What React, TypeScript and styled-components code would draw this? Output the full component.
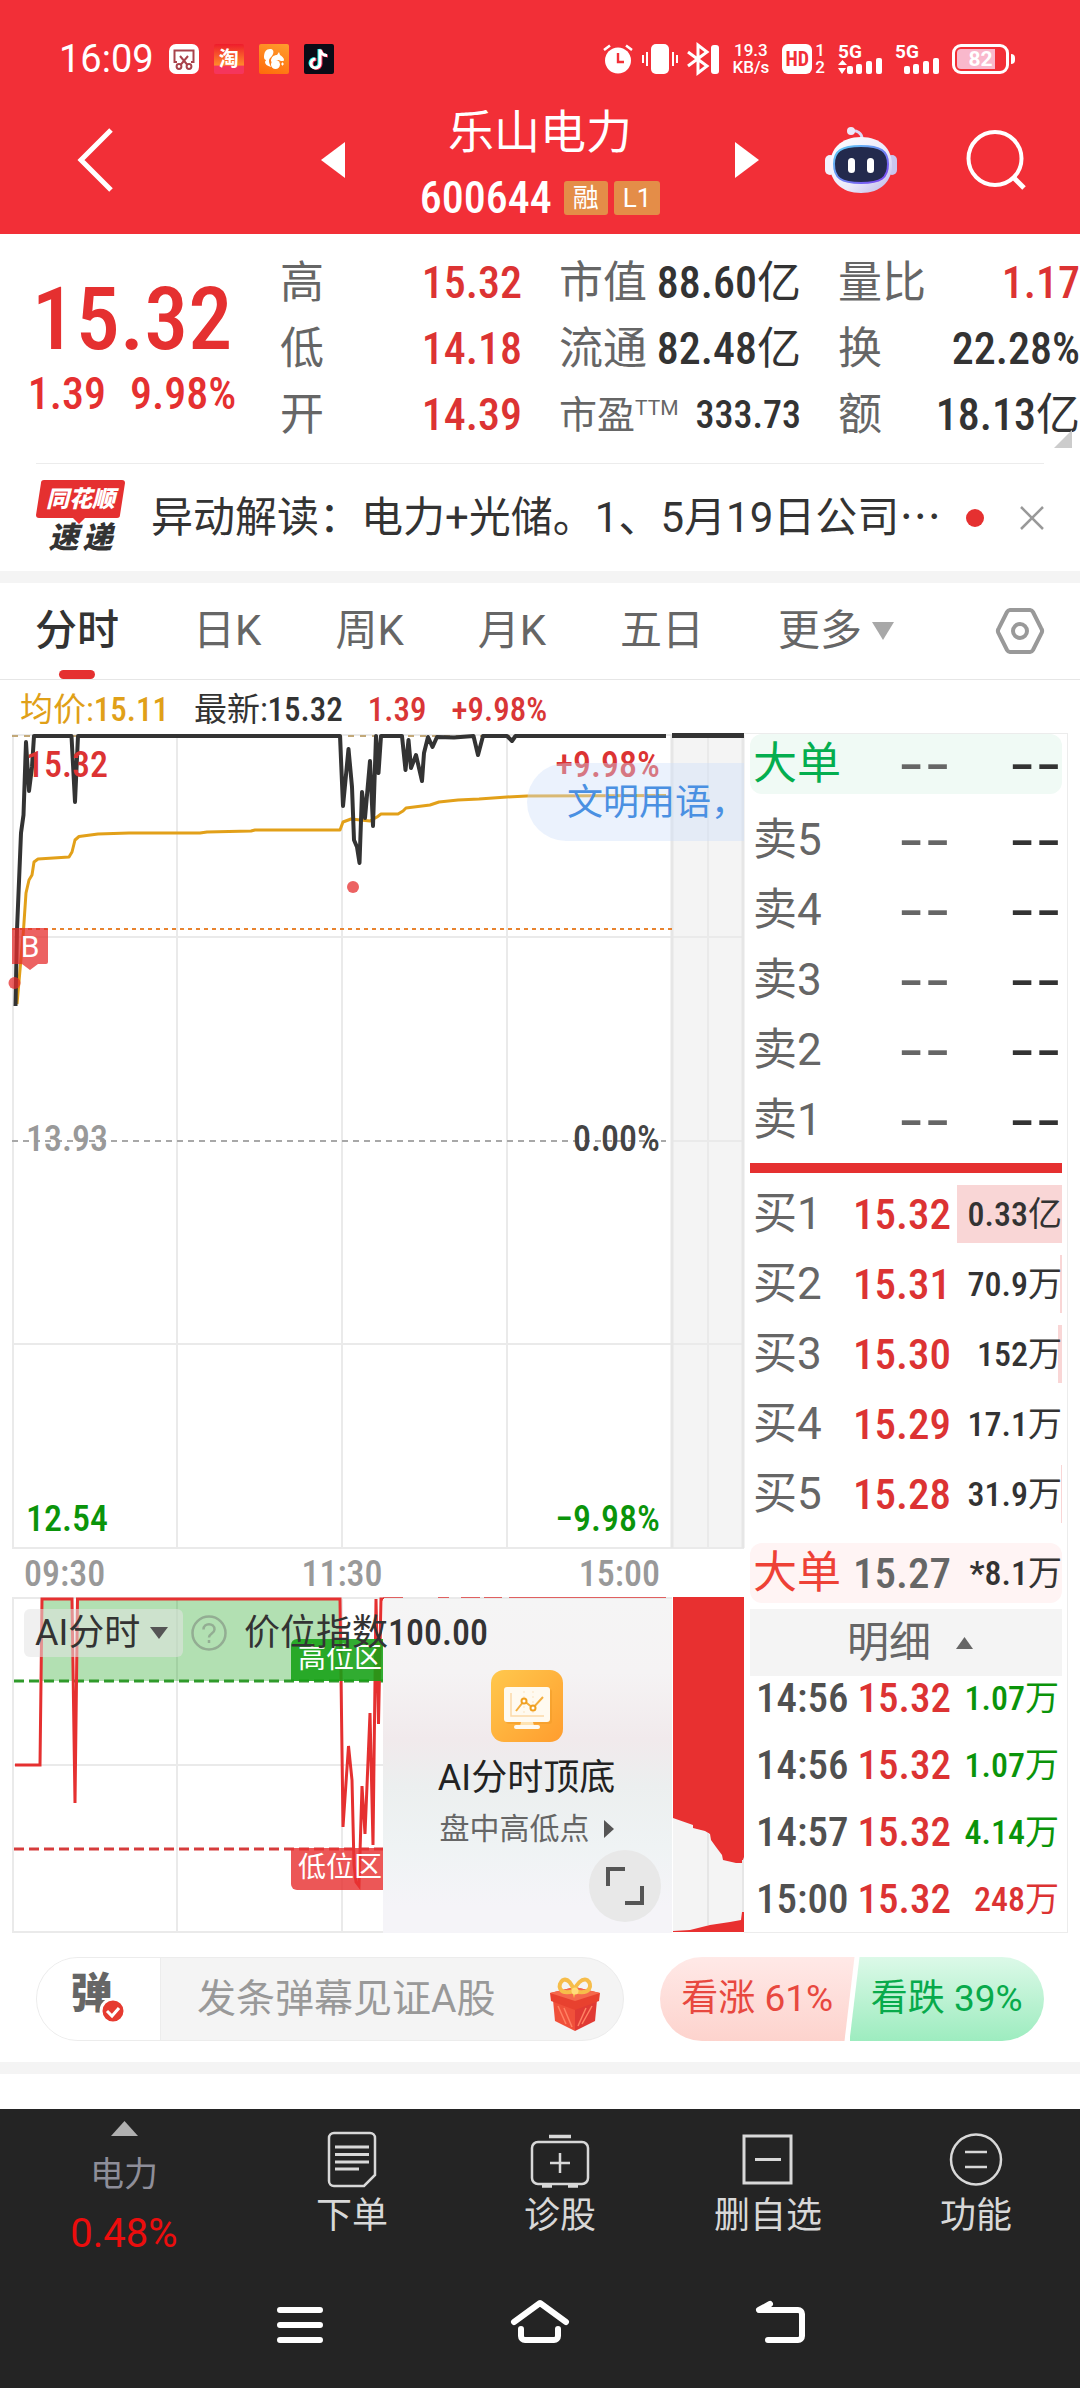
import React from 'react';
import styled, { createGlobalStyle, css } from 'styled-components';

const RED = '#e53030';
const INK = '#333333';
const MUTED = '#666666';
const LINE = '#ececec';
const BAND = '#f4f4f4';
const TEXT_FONT = 'Roboto, "Noto Sans CJK SC", sans-serif';
const NUM_FONT = '"Roboto Condensed", "Noto Sans CJK SC", sans-serif';

const GlobalStyle = createGlobalStyle`
  * { box-sizing: border-box; }
  body { margin: 0; background: #fff; font-family: ${TEXT_FONT}; color: ${INK}; }
  button, input, select { font-family: inherit; border: 0; padding: 0; margin: 0; background: none; color: inherit; }
  button { cursor: pointer; }
  a { color: inherit; text-decoration: none; }
  svg { display: block; flex: none; overflow: visible; }
  table, tbody { display: block; }
  td, th { padding: 0; font-weight: inherit; text-align: left; }
  dl, dd, dt, h1, p { margin: 0; font-weight: inherit; }
`;

const Page = styled.div`
  display: flex;
  flex-direction: column;
  min-height: 100vh;
`;

const Num = styled.span`
  font-family: ${NUM_FONT};
  font-weight: 500;
`;

const SrOnly = styled.span`
  position: absolute;
  width: 1px;
  height: 1px;
  overflow: hidden;
  clip-path: inset(50%);
`;

/* ---------- header ---------- */

const Header = styled.header`
  background: #f22f37;
  color: #fff;
  height: 234px;
`;

const StatusBar = styled.div`
  display: flex;
  align-items: center;
  justify-content: space-between;
  height: 118px;
  padding: 0 64px 0 59px;
`;

const StatusGroup = styled.div<{ $gap: number }>`
  display: flex;
  align-items: center;
  gap: ${p => p.$gap}px;
`;

const Clock = styled.time`
  font-size: 38px;
  line-height: 40px;
`;

const AppBadge = styled.span<{ $bg: string; $radius: number }>`
  display: grid;
  place-items: center;
  width: 30px;
  height: 30px;
  overflow: hidden;
  border-radius: ${p => p.$radius}px;
  background: ${p => p.$bg};
`;

const BadgeGlyph = styled.span`
  font-size: 20px;
  line-height: 22px;
  font-weight: 700;
`;

const Stack = styled.span<{ $size: number }>`
  display: flex;
  flex-direction: column;
  align-items: center;
  font-size: ${p => p.$size}px;
  line-height: 17px;
  font-weight: 500;
`;

const HdBox = styled.span`
  display: grid;
  place-items: center;
  width: 30px;
  height: 30px;
  border-radius: 6px;
  background: #fff;
  color: #f22f37;
  font: 700 20px/30px ${NUM_FONT};
`;

const Battery = styled.span`
  position: relative;
  display: grid;
  place-items: center;
  width: 57px;
  height: 30px;
  margin-right: 7px;
  border: 3px solid #fff;
  border-radius: 9px;
  background: linear-gradient(90deg, #f9b8cc 80%, transparent 80%) content-box;
  padding: 2px;
  font-size: 21px;
  line-height: 20px;
  font-weight: 700;
  &::after {
    content: '';
    position: absolute;
    right: -9px;
    top: 7px;
    width: 4px;
    height: 10px;
    border-radius: 0 4px 4px 0;
    background: #fff;
  }
`;

const TitleRow = styled.div`
  display: flex;
  align-items: center;
  height: 84px;
  padding: 0 54px 0 77px;
`;

const IconButton = styled.button`
  display: grid;
  place-items: center;
`;

const Switcher = styled.div`
  display: flex;
  flex: 1;
  align-items: center;
  justify-content: space-between;
  max-width: 438px;
  margin: 0 auto 0 208px;
`;

const TitleBlock = styled.div`
  display: flex;
  flex-direction: column;
  align-items: center;
`;

const StockName = styled.h1`
  font-size: 46px;
  line-height: 54px;
`;

const CodeLine = styled.div`
  display: flex;
  align-items: center;
  gap: 6px;
  height: 56px;
  padding-top: 22px;
  font-size: 44px;
  line-height: 34px;
`;

const Code = styled(Num)`
  margin-right: 6px;
`;

const Tag = styled.span`
  height: 34px;
  padding: 0 9px;
  border-radius: 3px;
  background: #e48d48;
  font-size: 26px;
  line-height: 34px;
`;

const HeadActions = styled.div`
  display: flex;
  align-items: center;
  gap: 69px;
`;

/* ---------- quote summary ---------- */

const Quote = styled.section`
  display: flex;
  padding: 16px 0 15px;
`;

const PriceBlock = styled.div`
  display: flex;
  flex-direction: column;
  align-items: center;
  gap: 8px;
  width: 264px;
  margin-right: 16px;
  padding-top: 27px;
  color: ${RED};
  font-family: ${NUM_FONT};
  font-weight: 500;
`;

const BigPrice = styled.strong`
  font-size: 88px;
  line-height: 84px;
  font-weight: 500;
`;

const Change = styled.div`
  display: flex;
  gap: 24px;
  font-size: 44px;
  line-height: 50px;
`;

const Stats = styled.dl`
  position: relative;
  display: grid;
  flex: 1;
  grid-template-columns: repeat(3, 1fr);
  grid-auto-rows: 66px;
  column-gap: 37px;
  &::after {
    content: '';
    position: absolute;
    right: 8px;
    bottom: 0;
    border-left: 18px solid transparent;
    border-bottom: 18px solid #cccccc;
  }
`;

const Stat = styled.div<{ $small?: boolean }>`
  display: flex;
  justify-content: space-between;
  white-space: nowrap;
  font-size: ${p => (p.$small ? 38 : 44)}px;
  line-height: 66px;
  dt { display: flex; color: ${MUTED}; }
`;

const StatValue = styled.dd<{ $up?: boolean }>`
  font-family: ${NUM_FONT};
  font-weight: 500;
  color: ${p => (p.$up ? '#dc3333' : INK)};
`;

const Unit = styled.span`
  font-weight: 400;
`;

const Sup = styled.sup`
  margin-top: 16px;
  font-size: 21px;
  line-height: 20px;
`;

const News = styled.section`
  display: flex;
  align-items: center;
  height: 108px;
  margin: 0 36px;
  border-top: 1px solid ${LINE};
`;

const NewsLogo = styled.div`
  position: relative;
  display: flex;
  flex-direction: column;
  align-items: center;
  width: 89px;
  margin-right: 26px;
  font-style: italic;
  font-weight: 900;
  svg { position: absolute; left: 0; top: 0; }
`;

const LogoTop = styled.span`
  position: relative;
  color: #fff;
  font-size: 23px;
  line-height: 40px;
`;

const LogoBottom = styled.span`
  display: flex;
  gap: 4px;
  font-size: 30px;
  line-height: 36px;
`;

const NewsText = styled.a`
  flex: 1;
  font-size: 42px;
  line-height: 54px;
  white-space: nowrap;
`;

const Dot = styled.i`
  width: 18px;
  height: 18px;
  margin-right: 36px;
  border-radius: 50%;
  background: ${RED};
`;

const Band = styled.div`
  height: 12px;
  background: ${BAND};
`;

/* ---------- tabs ---------- */

const Tabs = styled.nav`
  display: flex;
  align-items: center;
  gap: 74px;
  height: 97px;
  padding: 0 36px 0 35px;
  border-bottom: 1px solid #e6e6e6;
`;

const Tab = styled.button<{ $active?: boolean }>`
  position: relative;
  display: flex;
  align-items: center;
  gap: 10px;
  height: 96px;
  font-size: 42px;
  line-height: 100px;
  color: ${p => (p.$active ? INK : MUTED)};
  font-weight: ${p => (p.$active ? 500 : 400)};
  ${p => p.$active && css`
    &::after {
      content: '';
      position: absolute;
      left: 50%;
      bottom: 0;
      width: 36px;
      height: 9px;
      margin-left: -18px;
      border-radius: 5px;
      background: ${RED};
    }
  `}
`;

const SettingsButton = styled(IconButton)`
  margin-left: auto;
`;

const PriceLine = styled.div`
  display: flex;
  gap: 25px;
  height: 53px;
  padding-left: 20px;
  font: 500 33px/60px ${NUM_FONT};
  white-space: nowrap;
`;

const Quoted = styled.span<{ $color: string }>`
  color: ${p => p.$color};
`;

/* ---------- chart column ---------- */

const Board = styled.main`
  display: grid;
  grid-template-columns: minmax(0, 31fr) minmax(0, 14fr);
`;

const ChartColumn = styled.div``;

const BookColumn = styled.div`
  padding-right: 12px;
`;

const ChartBox = styled.div`
  position: relative;
  svg.plot { width: 100%; height: auto; }
`;

const AxisLabel = styled.span<{ $top: number; $side: 'left' | 'right'; $color: string }>`
  position: absolute;
  top: ${p => p.$top}px;
  ${p => (p.$side === 'left' ? 'left: 26px' : 'right: 84px')};
  color: ${p => p.$color};
  font: 500 36px/40px ${NUM_FONT};
`;

const Bubble = styled.div`
  position: absolute;
  right: 0;
  top: 30px;
  width: 217px;
  height: 78px;
  padding-left: 40px;
  border-radius: 39px 0 0 39px;
  background: rgba(205, 222, 250, 0.4);
  color: #4a90e2;
  font-size: 36px;
  line-height: 80px;
  white-space: nowrap;
`;

const TimeAxis = styled.div`
  display: flex;
  justify-content: space-between;
  height: 48px;
  padding: 0 84px 0 24px;
  color: #999;
  font: 500 36px/50px ${NUM_FONT};
`;

const SubTools = styled.div`
  position: absolute;
  left: 24px;
  top: 12px;
  z-index: 2;
  display: flex;
  align-items: center;
  height: 48px;
  font-size: 36px;
`;

const IndicatorPicker = styled.label`
  position: relative;
  width: 159px;
  height: 48px;
  margin-right: 8px;
  svg { position: absolute; right: 15px; top: 18px; pointer-events: none; }
`;

const Select = styled.select`
  width: 100%;
  height: 48px;
  padding-left: 11px;
  border-radius: 6px;
  background: rgba(228, 228, 228, 0.55);
  appearance: none;
  font-size: 36px;
`;

const IndexText = styled.span`
  display: flex;
  margin-left: 17px;
  font-family: ${NUM_FONT};
  line-height: 48px;
`;

const ZoneTag = styled.span<{ $top: number; $bg: string; $radius: string }>`
  position: absolute;
  left: 291px;
  top: ${p => p.$top}px;
  width: 92px;
  height: 42px;
  padding-left: 7px;
  border-radius: ${p => p.$radius};
  background: ${p => p.$bg};
  color: #fff;
  font-size: 28px;
  line-height: 40px;
  white-space: nowrap;
`;

const Promo = styled.a`
  position: absolute;
  left: 383px;
  right: 72px;
  top: 2px;
  bottom: 0;
  display: flex;
  flex-direction: column;
  align-items: center;
  padding: 71px 2px 0 0;
  background: linear-gradient(180deg, #f5f5f5 0, #f5f3f4 22%, #f1eaec 42%, #ecefef 56%, #eff3f4 74%, #f5f4f8 92%);
`;

const PromoTitle = styled.span`
  margin-top: 11px;
  font-size: 36px;
  line-height: 50px;
  color: #222;
`;

const PromoSub = styled.span`
  display: flex;
  align-items: center;
  gap: 14px;
  margin-top: 4px;
  font-size: 30px;
  line-height: 44px;
  color: ${MUTED};
`;

const Expand = styled.button`
  position: absolute;
  right: 83px;
  bottom: 11px;
  display: grid;
  place-items: center;
  width: 72px;
  height: 72px;
  border-radius: 50%;
  background: #e8e8e8;
`;

/* ---------- order book ---------- */

const Book = styled.div`
  height: 100%;
  padding: 0 5px 0 6px;
  border: 1px solid ${LINE};
  border-left: 0;
`;

const Level = styled.tr<{ $bar?: number }>`
  display: grid;
  grid-template-columns: 92px 106px 1fr;
  align-items: center;
  height: 70px;
  padding-left: 3px;
  white-space: nowrap;
  background: linear-gradient(#f9d6d6, #f9d6d6) right center / ${p => p.$bar || 0}px 58px no-repeat;
`;

const BigOrder = styled.table<{ $bg: string; $above?: number; $below: number }>`
  margin-top: ${p => p.$above || 0}px;
  margin-bottom: ${p => p.$below}px;
  border-radius: 12px;
  background: ${p => p.$bg};
  ${Level} { height: 60px; }
`;

const LevelName = styled.th<{ $color?: string }>`
  color: ${p => p.$color || MUTED};
  font-size: 44px;
  line-height: 58px;
`;

const LevelPrice = styled.td<{ $color?: string }>`
  && { text-align: right; }
  color: ${p => p.$color || '#dc3333'};
  font: 500 43px/58px ${NUM_FONT};
`;

const LevelVolume = styled.td`
  && { text-align: right; }
  font: 500 34px/60px ${NUM_FONT};
`;

const Dashes = styled.td<{ $color: string }>`
  && { text-align: right; }
  color: ${p => p.$color};
  font: 400 58px/56px Inter, sans-serif;
`;

const Spread = styled.div`
  height: 10px;
  margin: 8px 0 6px;
  background: ${RED};
`;

const DetailToggle = styled.button`
  display: flex;
  align-items: center;
  justify-content: center;
  gap: 25px;
  width: 100%;
  height: 67px;
  padding-left: 8px;
  background: ${BAND};
  color: ${MUTED};
  font-size: 42px;
  line-height: 67px;
`;

const Ticks = styled.table`
  font: 500 41px/44px ${NUM_FONT};
  tbody { display: grid; row-gap: 23px; }
`;

const Tick = styled.tr<{ $color: string }>`
  display: grid;
  grid-template-columns: 97px 98px 1fr;
  align-items: center;
  padding: 0 3px 0 6px;
  white-space: nowrap;
  td { text-align: right; }
  td:first-child { text-align: left; color: #505050; }
  td:nth-child(2) { color: #dc3333; }
  td:last-child { color: ${p => p.$color}; font-size: 34px; }
`;

/* ---------- comment bar ---------- */

const SocialBar = styled.section`
  display: flex;
  gap: 36px;
  padding: 24px 36px 21px;
`;

const Comment = styled.div`
  display: flex;
  flex: 1;
  height: 84px;
  overflow: hidden;
  border: 1px solid ${LINE};
  border-radius: 42px;
  background: ${BAND};
`;

const DanmakuToggle = styled.button`
  position: relative;
  width: 124px;
  padding: 0 14px 10px 0;
  border-right: 1px solid ${LINE};
  background: #fff;
  color: ${MUTED};
  font-size: 42px;
  line-height: 72px;
  font-weight: 900;
  svg { position: absolute; left: 62px; top: 39px; }
`;

const CommentInput = styled.input`
  flex: 1;
  min-width: 0;
  padding-left: 36px;
  font-size: 39px;
  &::placeholder { color: #999; opacity: 1; }
`;

const GiftButton = styled(IconButton)`
  align-self: flex-start;
  margin: 20px 23px 0 0;
`;

const Votes = styled.div`
  display: flex;
  width: 384px;
  height: 84px;
  overflow: hidden;
  border-radius: 42px;
`;

const Vote = styled.button<{ $side: 'up' | 'down' }>`
  flex: 1;
  font-size: 37px;
  line-height: 82px;
  white-space: nowrap;
  ${p => p.$side === 'up'
    ? css`
      margin-right: -2px;
      color: #e8483f;
      background: linear-gradient(#ffe9e7, #fdd3cd);
      clip-path: polygon(0 0, 100% 0, calc(100% - 10px) 100%, 0 100%);
    `
    : css`
      margin-left: -3px;
      color: #08aa4b;
      background: linear-gradient(#dcf9e8, #9decbf);
      clip-path: polygon(10px 0, 100% 0, 100% 100%, 0 100%);
    `}
`;

/* ---------- bottom ---------- */

const Bottom = styled.footer`
  flex: 1;
  margin-top: 35px;
  background: #242424;
  color: #d8d8d8;
`;

const Actions = styled.nav`
  display: grid;
  grid-template-columns: 248fr 208fr 208fr 208fr 208fr;
  height: 156px;
`;

const Action = styled.button`
  display: flex;
  flex-direction: column;
  align-items: center;
  gap: 2px;
  padding-top: 20px;
  font-size: 36px;
  line-height: 50px;
`;

const Sector = styled.button`
  display: flex;
  flex-direction: column;
  align-items: center;
  padding-top: 12px;
`;

const SectorName = styled.span`
  margin-top: 16px;
  color: #8e8e99;
  font-size: 34px;
  line-height: 44px;
`;

const SectorChange = styled.span`
  margin-top: 16px;
  color: #ec0d0d;
  font-size: 40px;
  line-height: 44px;
`;

const SystemNav = styled.nav`
  display: grid;
  grid-template-columns: repeat(3, 1fr);
  padding: 0 calc(100% / 6);
  height: 120px;
`;

/* ---------- drawings ---------- */

const ScissorsIcon = () => (
  <svg width="30" height="30" viewBox="0 0 30 30" fill="none" stroke="#a8434c" strokeWidth="2">
    <path d="M8 18H5.500V6.500h19V18H22M11 12l7.500 9M19 12l-7.500 9" />
    <circle cx="10" cy="22.500" r="2.400" /><circle cx="20" cy="22.500" r="2.400" />
  </svg>
);

const SquirrelIcon = () => (
  <svg width="30" height="30" viewBox="0 0 30 30" fill="#fff">
    <path d="M5 13c0-5 2-8 6-8 3 0 4 2 3 5-1 3-4 4-4 7 0 2 1 4 2 6-4-1-6-3-6-5 0-1 1-1 1-2-1 0-2-1-2-3z" />
    <path d="M12 17c0-4 3-6 6-6l2-3 1 3c2 1 4 3 4 5 0 1-1 1-3 1-1 0-1-1-3-1-3 0-5 2-5 4z" />
    <circle cx="16.500" cy="20.500" r="4.500" />
    <path d="M22 20l3 0M23.500 18.500v3" stroke="#fff" />
  </svg>
);

const TikTokIcon = () => (
  <svg width="30" height="30" viewBox="0 0 30 30" fill="none" strokeWidth="3">
    <path d="M15 5v14a4.500 4.500 0 1 1-4.500-4.500M15 5c1 4 4 6 7 6" stroke="#25f4ee" />
    <path d="M17 6v14a4.500 4.500 0 1 1-4.500-4.500M17 6c1 4 4 6 7 6" stroke="#fe2c55" />
    <path d="M16 5.500v14a4.500 4.500 0 1 1-4.500-4.500M16 5.500c1 4 4 6 7 6" stroke="#fff" />
  </svg>
);

const AlarmIcon = () => (
  <svg width="30" height="30" viewBox="0 0 30 30">
    <circle cx="15" cy="16.500" r="13" fill="#fff" />
    <path d="M1 6l6-4.500M29 6l-6-4.500" stroke="#fff" strokeWidth="2.600" />
    <path d="M15 9v9h6" stroke="#f22f37" strokeWidth="2.400" fill="none" />
  </svg>
);

const VibrateIcon = () => (
  <svg width="36" height="30" viewBox="0 0 36 30">
    <rect x="9" width="18" height="30" rx="5" fill="#fff" />
    <path d="M1 11v8M5 8v14M31 8v14M35 11v8" stroke="#fff" strokeWidth="2" />
  </svg>
);

const BluetoothIcon = () => (
  <svg width="32" height="30" viewBox="0 0 32 30" fill="none" stroke="#fff" strokeWidth="3">
    <path d="M1 8l19 14-9 7V1l9 7L1 22" />
    <rect x="24" y="1" width="8" height="29" rx="3" fill="#fff" stroke="none" />
  </svg>
);

const SignalIcon = ({ data }: { data?: boolean }) => (
  <svg width="44" height="30" viewBox="0 0 44 30" fill="#fff">
    <text x="0" y="14" fontSize="19" fontWeight="700" fontFamily="Roboto, sans-serif">5G</text>
    <rect x="9" y="22" width="6" height="8" rx="2" /><rect x="18" y="20" width="6" height="10" rx="2" />
    <rect x="28" y="17" width="6" height="13" rx="2" /><rect x="38" y="14" width="6" height="16" rx="2" />
    {data && <path d="M0 21l4.500-5 4.500 5zM0 24h8l-4 6z" />}
  </svg>
);

const RobotIcon = () => (
  <svg width="72" height="66" viewBox="0 0 72 66">
    <defs>
      <linearGradient id="shell" x1="0" y1="0" x2="1" y2="1">
        <stop offset="0" stopColor="#ffffff" /><stop offset="0.600" stopColor="#ebe9fa" /><stop offset="1" stopColor="#b9b4e8" />
      </linearGradient>
      <linearGradient id="rim" x1="0" y1="0" x2="1" y2="1">
        <stop offset="0" stopColor="#5fd0f5" /><stop offset="1" stopColor="#7a3ff0" />
      </linearGradient>
    </defs>
    <path d="M26 4c6-1 11 2 11 8" fill="none" stroke="#dcd8f4" strokeWidth="3" />
    <circle cx="26" cy="4" r="4" fill="#ece8fa" />
    <rect x="0" y="28" width="10" height="20" rx="5" fill="#f3f1fc" /><rect x="62" y="28" width="10" height="20" rx="5" fill="#c9c6ee" />
    <path d="M36 10c20 0 31 12 31 28S56 66 36 66 5 54 5 38s11-28 31-28z" fill="url(#shell)" />
    <path d="M36 19c20 0 27 5 27 18 0 14-7 19-27 19S9 51 9 37c0-13 7-18 27-18z" fill="#232a4d" stroke="url(#rim)" strokeWidth="2" />
    <rect x="23" y="31" width="7" height="15" rx="3.500" fill="#fff" /><rect x="42" y="31" width="7" height="15" rx="3.500" fill="#fff" />
  </svg>
);

const GiftIcon = () => (
  <svg width="50" height="54" viewBox="0 0 50 54">
    <path d="M3 22l22 9v22L5 43z" fill="#f0503a" />
    <path d="M47 22l-22 9v22l20-10z" fill="#e03a34" />
    <path d="M0 15l25-6 25 6-1 8-24 9L1 23z" fill="#e8412f" />
    <path d="M0 15l25-6 25 6-25 8z" fill="#f5694c" />
    <path d="M8 28l8 18M14 30l8 19M42 28L32 46M36 30l-8 18" stroke="#ff8062" strokeWidth="1.500" />
    <path d="M24 13C8 18 7 6 13 2c5-2 9 4 11 11 2-7 8-13 13-11 6 4 4 16-13 11z" fill="none" stroke="#f6bd4a" strokeWidth="4" />
    <circle cx="25" cy="13" r="3.500" fill="#ffdc7a" />
  </svg>
);

const PromoIcon = () => (
  <svg width="72" height="72" viewBox="0 0 72 72">
    <defs>
      <linearGradient id="amber" x1="0" y1="0" x2="1" y2="1">
        <stop offset="0" stopColor="#ffc84d" /><stop offset="1" stopColor="#ff9d2e" />
      </linearGradient>
    </defs>
    <rect width="72" height="72" rx="13" fill="url(#amber)" />
    <rect x="15" y="19" width="46" height="35" rx="3" fill="#ef9a25" opacity="0.500" />
    <rect x="13" y="17" width="46" height="35" rx="3" fill="#fffaf0" />
    <path d="M30 52h12l1 4h-14z" fill="#ffe3b0" />
    <rect x="23" y="55" width="26" height="4" rx="2" fill="#fffaf0" />
    <path d="M20 23v23h33" fill="none" stroke="#fbd9a8" strokeWidth="1.500" />
    <path d="M33 21v22M42 21v22" stroke="#fbe3c0" strokeDasharray="2 3" />
    <path d="M25 41l8-10 9 7 10-11" fill="none" stroke="#f3ae3e" strokeWidth="2" />
    <circle cx="33" cy="31" r="2.500" fill="#fff" stroke="#f0a020" strokeWidth="2" />
    <circle cx="42" cy="38" r="2.500" fill="#fff" stroke="#f0a020" strokeWidth="2" />
  </svg>
);

const Triangle = ({ dir, w, h, color }: { dir: 'l' | 'r' | 'u' | 'd'; w: number; h: number; color: string }) => {
  const points = {
    l: `0,${h / 2} ${w},0 ${w},${h}`,
    r: `0,0 ${w},${h / 2} 0,${h}`,
    u: `0,${h} ${w / 2},0 ${w},${h}`,
    d: `0,0 ${w},0 ${w / 2},${h}`,
  }[dir];
  return <svg width={w} height={h} viewBox={`0 0 ${w} ${h}`}><polygon points={points} fill={color} /></svg>;
};

const PRICE_PATH =
  'M15.500 1006L17 930 21 833 23.500 815 26 742 29 791 32 767 34 736H71.500L75 802 78 736H340L343 806 348.500 749 352 787 354 840 357 847 359.500 863 362 792 365 818 370 761 373 826 376 736 378.500 773 381 736H402L405.500 770 408.500 740 411 768 416 755 422 781 424 753 428 737 432.500 747 437 737 454 737.500 473.500 736 478 755 483 736H507L512 741 515.500 736H666';
const AVG_PATH =
  'M17 1004L23.500 930 26 893 29 880 32 875 34 862 38 859 69 857 72 852 75 840 79 836.500 98 834 129 833H200L207 832 251 831 255 830H340L343 822 351 819 370 821 377 817 381 814H398L403 811 406 808 430 805 439 802 458 800 479 799 507 797 527 796 666 795.500';
const INDEX_PATH =
  'M15 1765H40L42 1599H72L75 1803 77.500 1599H340L343 1827 348.500 1746 352 1780 354 1865 356 1882 359 1886 362 1786 365 1834 370 1713 373 1845 376 1599 378.500 1724 381 1599H384';

const MinuteChart = () => (
  <svg className="plot" viewBox="0 733 744 816" fill="none">
    <rect x="672" y="735" width="72" height="813" fill="#f4f4f4" />
    <path d="M13 735V1548M177 735V1548M342 735V1548M507 735V1548M12 735H744M12 937H744M672 1141H744M12 1344H744M12 1548H744M708 735V1548" stroke="#eaeaea" strokeWidth="2" />
    <path d="M672 735V1548M743 735V1548" stroke="#e6e6e6" strokeWidth="3" />
    <path d="M12 736H666" stroke="#c2a878" strokeWidth="2" strokeDasharray="6 6" />
    <path d="M12 929H672" stroke="#e8832f" strokeWidth="2" strokeDasharray="4 4" />
    <path d="M12 1141H666" stroke="#a8a8a8" strokeWidth="2" strokeDasharray="6 5" />
    <path d={AVG_PATH} stroke="#e2a019" strokeWidth="3" strokeLinejoin="round" />
    <path d={PRICE_PATH} stroke="#333" strokeWidth="4" strokeLinejoin="round" />
    <path d="M672 735.500H744" stroke="#333" strokeWidth="5" />
    <g fill="#e62d2d" fillOpacity="0.750">
      <circle cx="353" cy="887" r="6" /><circle cx="14.500" cy="983" r="6" />
      <path d="M14 928H46a2 2 0 0 1 2 2V962a2 2 0 0 1-2 2H38L30 970 22 964H12V930a2 2 0 0 1 2-2z" />
    </g>
    <text x="30" y="957" fontSize="30" textAnchor="middle" fill="#fff" fontFamily="Roboto, sans-serif">B</text>
  </svg>
);

const IndexChart = () => (
  <svg className="plot" viewBox="0 1597 744 336" fill="none">
    <path d="M13 1598V1932M177 1598V1932M342 1598V1932M12 1598H672M12 1765H672M12 1932H672" stroke="#eaeaea" strokeWidth="2" />
    <path d="M42 1599H72L73 1681H41zM77.500 1599H340V1681H76z" fill="#009900" fillOpacity="0.300" />
    <path d="M14 1681H384" stroke="#2f9a2a" strokeWidth="3" strokeDasharray="10 5" />
    <path d="M14 1849H384" stroke="#d63c3c" strokeWidth="3" strokeDasharray="10 5" />
    <path d={INDEX_PATH} stroke={RED} strokeWidth="3" />
    <path d="M383 1597.500H403M438 1597.500H449M461 1597.500H480M484 1597.500H502M509 1597.500H666" stroke="#e06060" />
    <rect x="673" y="1597" width="71" height="335" fill="#e83030" />
    <path d="M673 1818L693 1825V1828L705 1831 710 1834 711 1840 716 1847 722 1855 723 1860 736 1863H742L744 1857V1912H742L741 1920 730 1922 710 1925 690 1930 673 1931z" fill="#f4f4f4" />
    <path d="M708 1833V1925M743 1860V1912" stroke="#e6e6e6" strokeWidth="2" />
  </svg>
);

/* ---------- data ---------- */

const STATS = [
  { label: '高', value: '15.32', up: true },
  { label: '市值', value: '88.60', unit: '亿' },
  { label: '量比', value: '1.17', up: true },
  { label: '低', value: '14.18', up: true },
  { label: '流通', value: '82.48', unit: '亿' },
  { label: '换', value: '22.28%' },
  { label: '开', value: '14.39', up: true },
  { label: '市盈', sup: 'TTM', value: '333.73', small: true },
  { label: '额', value: '18.13', unit: '亿' },
];

const BUYS = [
  { name: '买1', price: '15.32', volume: '0.33', unit: '亿', bar: 105 },
  { name: '买2', price: '15.31', volume: '70.9', unit: '万', bar: 2 },
  { name: '买3', price: '15.30', volume: '152', unit: '万', bar: 4 },
  { name: '买4', price: '15.29', volume: '17.1', unit: '万', bar: 0 },
  { name: '买5', price: '15.28', volume: '31.9', unit: '万', bar: 1 },
];

const TICKS = [
  { time: '14:56', volume: '1.07', color: '#0a940a' },
  { time: '14:56', volume: '1.07', color: '#0a940a' },
  { time: '14:57', volume: '4.14', color: '#0a940a' },
  { time: '15:00', volume: '248', color: '#dc3333' },
];

export default function App() {
  return (
    <Page>
      <GlobalStyle />
      <Header>
        <StatusBar>
          <StatusGroup $gap={15}>
            <Clock>16:09</Clock>
            <AppBadge $bg="#fff" $radius={7}><ScissorsIcon /></AppBadge>
            <AppBadge $bg="linear-gradient(#ee1c2c, #ff8a2a 70%, #f5355c 74%)" $radius={2}><BadgeGlyph>淘</BadgeGlyph></AppBadge>
            <AppBadge $bg="linear-gradient(200deg, #ff9d2e, #ff6a0a)" $radius={2}><SquirrelIcon /></AppBadge>
            <AppBadge $bg="#0b0b16" $radius={2}><TikTokIcon /></AppBadge>
          </StatusGroup>
          <StatusGroup $gap={13}>
            <StatusGroup $gap={9}><AlarmIcon /><VibrateIcon /><BluetoothIcon /></StatusGroup>
            <Stack $size={17}><span>19.3</span><span>KB/s</span></Stack>
            <StatusGroup $gap={3}><HdBox>HD</HdBox><Stack $size={17}><span>1</span><span>2</span></Stack></StatusGroup>
            <SignalIcon data />
            <SignalIcon />
            <Battery>82</Battery>
          </StatusGroup>
        </StatusBar>
        <TitleRow>
          <IconButton aria-label="返回">
            <svg width="36" height="64" viewBox="0 0 36 64" fill="none"><path d="M34 2L4 32l30 30" stroke="#fff" strokeWidth="5" /></svg>
          </IconButton>
          <Switcher>
            <IconButton aria-label="上一只"><Triangle dir="l" w={24} h={36} color="#fff" /></IconButton>
            <TitleBlock>
              <StockName>乐山电力</StockName>
              <CodeLine>
                <Code>600644</Code>
                <Tag>融</Tag>
                <Tag>L1</Tag>
              </CodeLine>
            </TitleBlock>
            <IconButton aria-label="下一只"><Triangle dir="r" w={24} h={36} color="#fff" /></IconButton>
          </Switcher>
          <HeadActions>
            <IconButton aria-label="智能助手"><RobotIcon /></IconButton>
            <IconButton aria-label="搜索">
              <svg width="60" height="60" viewBox="0 0 60 60" fill="none" stroke="#fff" strokeWidth="4"><circle cx="29" cy="28.500" r="26.500" /><path d="M48 48l10 10" strokeWidth="5" /></svg>
            </IconButton>
          </HeadActions>
        </TitleRow>
      </Header>

      <Quote>
        <PriceBlock>
          <BigPrice>15.32</BigPrice>
          <Change><span>1.39</span><span>9.98%</span></Change>
        </PriceBlock>
        <Stats>
          {STATS.map(s => (
            <Stat key={s.label} $small={s.small}>
              <dt>{s.label}{s.sup && <Sup>{s.sup}</Sup>}</dt>
              <StatValue $up={s.up}>{s.value}{s.unit && <Unit>{s.unit}</Unit>}</StatValue>
            </Stat>
          ))}
        </Stats>
      </Quote>

      <News>
        <NewsLogo>
          <svg width="89" height="44" viewBox="0 0 89 44"><path d="M8 0H86a3 3 0 0 1 3 3L84 35a3 3 0 0 1-3 3H49l-6 6-6-6H3a3 3 0 0 1-3-3L5 3a3 3 0 0 1 3-3z" fill={RED} /></svg>
          <LogoTop>同花顺</LogoTop>
          <LogoBottom><span>速</span><span>递</span></LogoBottom>
        </NewsLogo>
        <NewsText href="#news">异动解读：电力+光储。1、5月19日公司⋯</NewsText>
        <Dot />
        <IconButton aria-label="关闭">
          <svg width="24" height="24" viewBox="0 0 24 24" stroke="#999" strokeWidth="2.500"><path d="M1 1l22 22M23 1L1 23" /></svg>
        </IconButton>
      </News>
      <Band />

      <Tabs>
        <Tab $active>分时</Tab>
        <Tab>日K</Tab>
        <Tab>周K</Tab>
        <Tab>月K</Tab>
        <Tab>五日</Tab>
        <Tab aria-haspopup="menu">更多<Triangle dir="d" w={22} h={18} color="#a8a8a8" /></Tab>
        <SettingsButton aria-label="图表设置">
          <svg width="48" height="46" viewBox="0 0 48 46" fill="none" stroke="#999" strokeWidth="4">
            <path d="M14 2H34a4 4 0 0 1 3 2L45 20a5 5 0 0 1 0 6L37 42a4 4 0 0 1-3 2H14a4 4 0 0 1-3-2L3 26a5 5 0 0 1 0-6L11 4a4 4 0 0 1 3-2z" />
            <circle cx="24" cy="23" r="7" />
          </svg>
        </SettingsButton>
      </Tabs>

      <PriceLine>
        <Quoted $color="#e0a018"><Unit>均价:</Unit>15.11</Quoted>
        <Quoted $color={INK}><Unit>最新:</Unit>15.32</Quoted>
        <Quoted $color="#d93636">1.39</Quoted>
        <Quoted $color="#d93636">+9.98%</Quoted>
      </PriceLine>

      <Board>
        <ChartColumn>
          <ChartBox>
            <MinuteChart />
            <AxisLabel $top={12} $side="left" $color="#dc3333">15.32</AxisLabel>
            <AxisLabel $top={12} $side="right" $color="#dc3333">+9.98%</AxisLabel>
            <AxisLabel $top={386} $side="left" $color="#999">13.93</AxisLabel>
            <AxisLabel $top={386} $side="right" $color="#444">0.00%</AxisLabel>
            <AxisLabel $top={766} $side="left" $color="#0a940a">12.54</AxisLabel>
            <AxisLabel $top={766} $side="right" $color="#0a940a">−9.98%</AxisLabel>
            <Bubble>文明用语，</Bubble>
          </ChartBox>
          <TimeAxis><span>09:30</span><span>11:30</span><span>15:00</span></TimeAxis>
          <ChartBox>
            <IndexChart />
            <ZoneTag $top={42} $bg="rgba(20, 160, 20, 0.88)" $radius="6px 0 0 0">高位区</ZoneTag>
            <ZoneTag $top={251} $bg="rgba(232, 50, 50, 0.82)" $radius="0 0 0 6px">低位区</ZoneTag>
            <Promo href="#ai">
              <PromoIcon />
              <PromoTitle>AI分时顶底</PromoTitle>
              <PromoSub>盘中高低点<Triangle dir="r" w={10} h={18} color="#555" /></PromoSub>
            </Promo>
            <SubTools>
              <IndicatorPicker>
                <SrOnly>指标</SrOnly>
                <Select defaultValue="ai"><option value="ai">AI分时</option></Select>
                <Triangle dir="d" w={18} h={12} color="#555" />
              </IndicatorPicker>
              <svg width="36" height="36" viewBox="0 0 36 36" fill="none" stroke="#93ad93" strokeWidth="2.500">
                <circle cx="18" cy="18" r="16.500" />
                <path d="M12.500 14.500c0-7 11-7 11 0 0 4-5.500 4-5.500 8M18 25v3" />
              </svg>
              <IndexText><span>价位指数</span><Num>100.00</Num></IndexText>
            </SubTools>
            <Expand aria-label="全屏">
              <svg width="38" height="38" viewBox="0 0 38 38" fill="none" stroke="#555" strokeWidth="4"><path d="M2 19V2h17M36 19v17H19" /></svg>
            </Expand>
          </ChartBox>
        </ChartColumn>

        <BookColumn>
          <Book>
            <BigOrder $bg="#f0faf5" $below={11}>
              <tbody>
                <Level>
                  <LevelName scope="row" $color="#04ae4f">大单</LevelName>
                  <Dashes $color={MUTED}>--</Dashes>
                  <Dashes $color={INK}>--</Dashes>
                </Level>
              </tbody>
            </BigOrder>
            <table>
              <tbody>
                {[5, 4, 3, 2, 1].map(n => (
                  <Level key={n}>
                    <LevelName scope="row">卖{n}</LevelName>
                    <Dashes $color={MUTED}>--</Dashes>
                    <Dashes $color={INK}>--</Dashes>
                  </Level>
                ))}
              </tbody>
            </table>
            <Spread />
            <table>
              <tbody>
                {BUYS.map(b => (
                  <Level key={b.name} $bar={b.bar}>
                    <LevelName scope="row">{b.name}</LevelName>
                    <LevelPrice>{b.price}</LevelPrice>
                    <LevelVolume>{b.volume}<Unit>{b.unit}</Unit></LevelVolume>
                  </Level>
                ))}
              </tbody>
            </table>
            <BigOrder $bg="#fff4f4" $above={14} $below={6}>
              <tbody>
                <Level>
                  <LevelName scope="row" $color="#ee4136">大单</LevelName>
                  <LevelPrice $color={MUTED}>15.27</LevelPrice>
                  <LevelVolume>*8.1<Unit>万</Unit></LevelVolume>
                </Level>
              </tbody>
            </BigOrder>
            <DetailToggle>明细<Triangle dir="u" w={17} h={12} color="#666" /></DetailToggle>
            <Ticks>
              <tbody>
                {TICKS.map((t, i) => (
                  <Tick key={i} $color={t.color}>
                    <td>{t.time}</td>
                    <td>15.32</td>
                    <td>{t.volume}<Unit>万</Unit></td>
                  </Tick>
                ))}
              </tbody>
            </Ticks>
          </Book>
        </BookColumn>
      </Board>

      <SocialBar>
        <Comment>
          <DanmakuToggle aria-label="弹幕开关">
            弹
            <svg width="28" height="28" viewBox="0 0 28 28"><circle cx="14" cy="14" r="12" fill="#e63a30" stroke="#fff" strokeWidth="3" /><path d="M8 14l5 5 7-8" fill="none" stroke="#fff" strokeWidth="3" /></svg>
          </DanmakuToggle>
          <CommentInput aria-label="发弹幕" placeholder="发条弹幕见证A股" />
          <GiftButton aria-label="礼物"><GiftIcon /></GiftButton>
        </Comment>
        <Votes>
          <Vote $side="up">看涨 61%</Vote>
          <Vote $side="down">看跌 39%</Vote>
        </Votes>
      </SocialBar>
      <Band />

      <Bottom>
        <Actions>
          <Sector>
            <Triangle dir="u" w={27} h={15} color="#b0b0b0" />
            <SectorName>电力</SectorName>
            <SectorChange>0.48%</SectorChange>
          </Sector>
          <Action>
            <svg width="60" height="60" viewBox="0 0 60 60" fill="none" stroke="#d8d8d8" strokeWidth="2.500">
              <path d="M12 4H48a5 5 0 0 1 5 5V46L42 57H12a5 5 0 0 1-5-5V9a5 5 0 0 1 5-5z" />
              <path d="M13 18H47M13 25.500H47M13 33H47M13 40H37" strokeWidth="3" />
            </svg>
            下单
          </Action>
          <Action>
            <svg width="60" height="60" viewBox="0 0 60 60" fill="none" stroke="#d8d8d8" strokeWidth="2.500">
              <rect x="2" y="13" width="56" height="42" rx="6" />
              <path d="M19 7.500H41M12 57H22M38 57H48" strokeWidth="3.500" />
              <path d="M20 34H40M30 24V44" />
            </svg>
            诊股
          </Action>
          <Action>
            <svg width="60" height="60" viewBox="0 0 60 60" fill="none" stroke="#d8d8d8" strokeWidth="3">
              <rect x="6" y="7" width="47" height="47" />
              <path d="M17 30.500H43" />
            </svg>
            删自选
          </Action>
          <Action>
            <svg width="60" height="60" viewBox="0 0 60 60" fill="none" stroke="#d8d8d8" strokeWidth="2.500">
              <circle cx="30" cy="30.500" r="25" />
              <path d="M19 23H41M19 38H41" />
            </svg>
            功能
          </Action>
        </Actions>
        <SystemNav>
          <IconButton aria-label="菜单">
            <svg width="60" height="50" viewBox="0 0 60 50" stroke="#fff" strokeWidth="6" strokeLinecap="round"><path d="M10 10H50M10 25H50M10 40H50" /></svg>
          </IconButton>
          <IconButton aria-label="主页">
            <svg width="60" height="50" viewBox="0 0 60 50" fill="none" stroke="#fff" strokeWidth="6" strokeLinecap="round" strokeLinejoin="round"><path d="M4 22L30 3 56 22M11 29V36a4 4 0 0 0 4 4H44a4 4 0 0 0 4-4V29" /></svg>
          </IconButton>
          <IconButton aria-label="后退">
            <svg width="60" height="50" viewBox="0 0 60 50" fill="none" stroke="#fff" strokeWidth="6" strokeLinecap="round" strokeLinejoin="round"><path d="M20 4L9 10H48a4 4 0 0 1 4 4V36a4 4 0 0 1-4 4H18" /></svg>
          </IconButton>
        </SystemNav>
      </Bottom>
    </Page>
  );
}
